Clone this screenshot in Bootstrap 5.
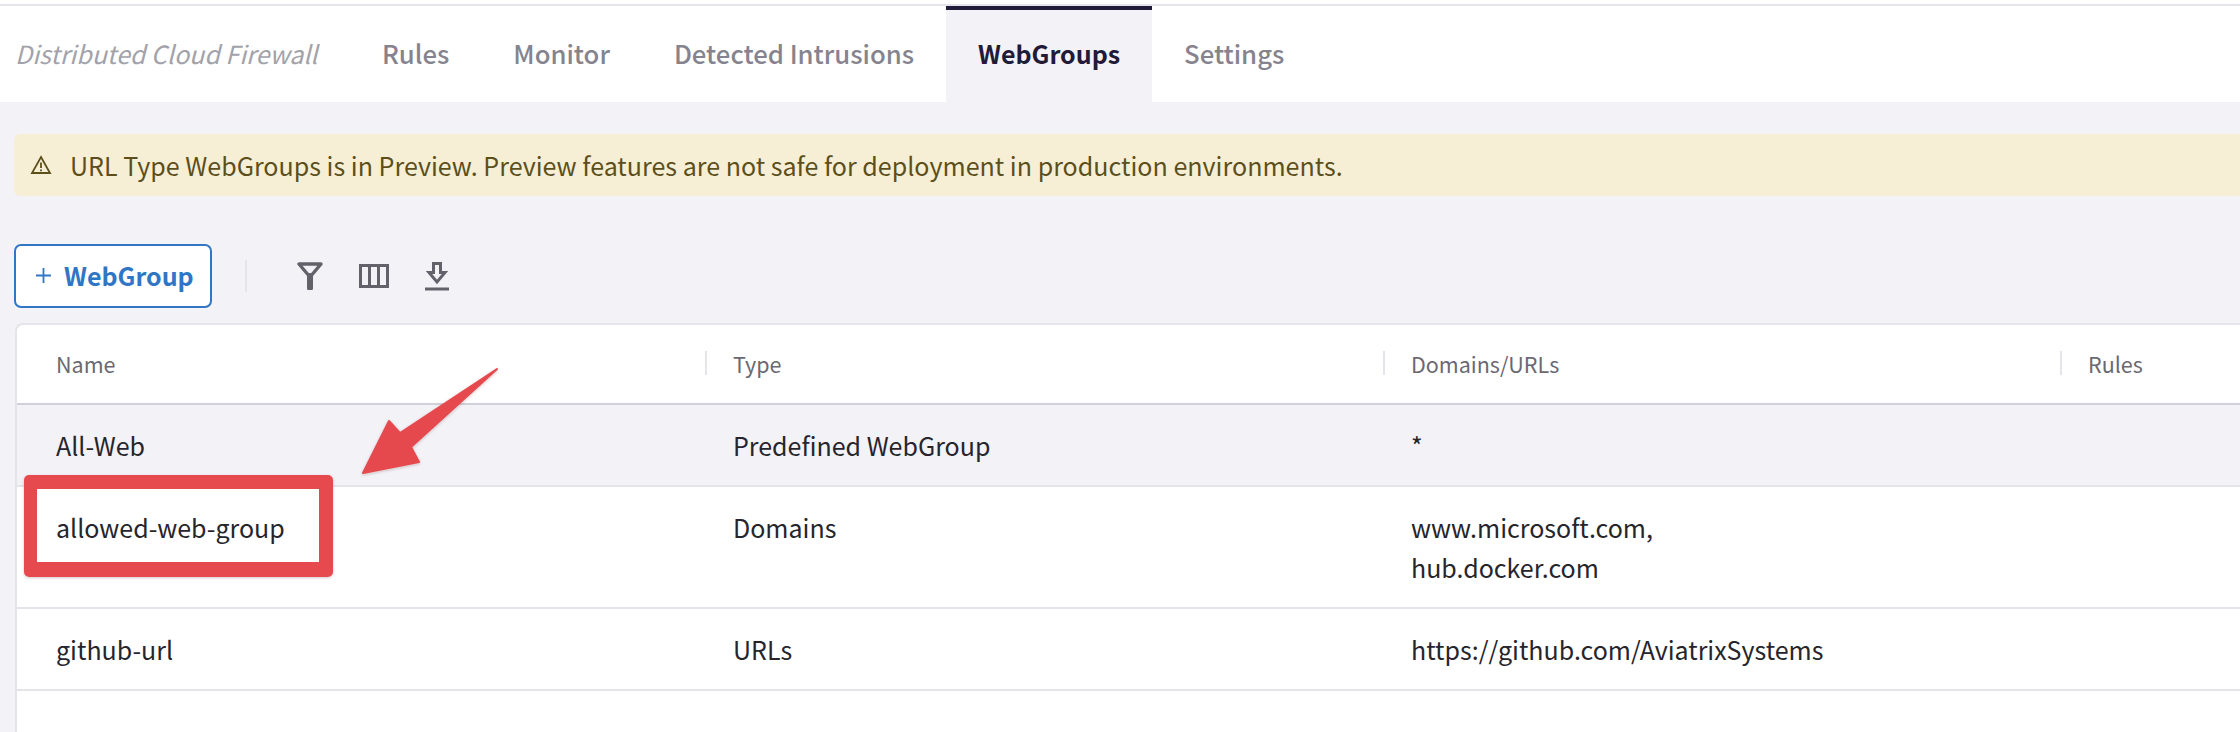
<!DOCTYPE html>
<html lang="en">
<head>
  <meta charset="UTF-8">
  <title>WebGroups</title>
  <link rel="stylesheet" href="https://cdn.jsdelivr.net/npm/bootstrap@5.3.0/dist/css/bootstrap.min.css">
  <style>
    html, body { height: 100%; }
    body {
      background: #f2f2f7;
      color: #26252c;
      font-family: "Noto Sans CJK SC", "Noto Sans", sans-serif;
      font-size: 25px;
      line-height: 40px;
      overflow: hidden;
      position: relative;
    }
    .top-strip { height: 6px; background: #fff; border-bottom: 2px solid #e4e4ea; }
    .tab-bar { height: 96px; background: #fff; padding-left: 15px; }
    .tab-title { width: 335px; margin-top: -2px; color: #a2a2aa; font-style: italic; font-size: 25px; }
    .tab-bar .nav-link {
      height: 96px;
      padding: 0 32px;
      color: #85848e;
      font-size: 25.7px;
      font-weight: 500;
      line-height: 86px;
      border-top: 4px solid transparent;
    }
    .tab-bar .nav-link.active { color: #1f1b38; background: #f2f2f7; border-top-color: #1f1b38; font-size: 25px; font-weight: 600; }
    .page-body { padding: 32px 0 0 14px; }
    .preview-note {
      height: 62px;
      margin-bottom: 48px;
      padding: 0 0 0 16px;
      gap: 18px;
      color: #5c4f1c;
      background: #f7efd5;
      border: 0;
      border-radius: 6px 0 0 6px;
      font-size: 25.05px;
    }
    .add-btn {
      width: 198px;
      height: 64px;
      padding: 0 0 2px 20px;
      gap: 13px;
      color: #3176c4;
      background: #fff;
      border: 2px solid #3176c4;
      border-radius: 7px;
      font-size: 25px;
      font-weight: 600;
      line-height: 56px;
    }
    .tool-sep { width: 2px; height: 32px; margin: 0 50px 0 33px; background: #e4e4ea; }
    .tool-icons { gap: 36px; color: #63626b; }
    .groups-card {
      margin: 15px 0 0 1px;
      height: 420px;
      background: #fff;
      border: 2px solid #e4e4ea;
      border-width: 2px 0 0 2px;
      border-radius: 8px 0 0 0;
    }
    .groups-table { width: 2240px; table-layout: fixed; margin: 0; background: transparent; }
    .groups-table th, .groups-table td {
      padding: 20px 28px;
      background: transparent;
      color: #26252c;
      font-weight: 400;
      vertical-align: top;
      border-bottom: 2px solid #e4e4ea;
      box-shadow: none;
    }
    .groups-table th:first-child, .groups-table td:first-child { padding-left: 39px; }
    .groups-table thead th {
      height: 78px;
      padding: 19px 28px 19px;
      color: #6a6973;
      font-size: 21.5px;
      border-bottom-color: #d0d0da;
      position: relative;
    }
    .groups-table thead th:first-child { padding-left: 39px; }
    .groups-table thead th + th::before {
      content: "";
      position: absolute;
      left: 0;
      top: 26px;
      height: 24px;
      width: 2px;
      background: #e4e4ea;
    }
    .groups-table tr.row-shaded td { background: #f2f2f7; }
    .callout-box {
      position: absolute;
      left: 24px;
      top: 475px;
      width: 309px;
      height: 102px;
      border: solid #e6494e;
      border-width: 14px 14px 15px 13px;
      border-radius: 5px;
      box-shadow: 0 1px 3px rgba(90, 40, 40, .25);
    }
    .callout-arrow { position: absolute; left: 350px; top: 360px; }
  </style>
</head>
<body>
  <div class="top-strip"></div>
  <nav class="tab-bar d-flex align-items-center">
    <div class="tab-title">Distributed Cloud Firewall</div>
    <ul class="nav">
      <li class="nav-item"><a class="nav-link" href="#">Rules</a></li>
      <li class="nav-item"><a class="nav-link" href="#">Monitor</a></li>
      <li class="nav-item"><a class="nav-link" href="#">Detected Intrusions</a></li>
      <li class="nav-item"><a class="nav-link active" href="#">WebGroups</a></li>
      <li class="nav-item"><a class="nav-link" href="#">Settings</a></li>
    </ul>
  </nav>

  <div class="page-body">
    <div class="alert preview-note d-flex align-items-center" role="alert">
      <svg width="22" height="20" viewBox="0 0 22 20" fill="none" stroke="currentColor" stroke-width="1.8">
        <path d="M11 2 L20 18 H2 Z" stroke-linejoin="miter"/>
        <path d="M11 7.5 V13 M11 14.5 V16.2"/>
      </svg>
      <span>URL Type WebGroups is in Preview. Preview features are not safe for deployment in production environments.</span>
    </div>

    <div class="d-flex align-items-center">
      <button class="btn add-btn d-flex align-items-center" type="button">
        <svg width="15" height="15" viewBox="0 0 15 15" stroke="currentColor" stroke-width="1.8"><path d="M7.5 0 V15 M0 7.5 H15"/></svg>
        <span>WebGroup</span>
      </button>
      <div class="tool-sep"></div>
      <div class="tool-icons d-flex align-items-center">
        <svg width="26" height="28" viewBox="0 0 26 28" fill="none" stroke="currentColor"><path d="M2 2 H24 L13 15 Z" stroke-width="3.4" stroke-linejoin="round"/><path d="M13 14 V26" stroke-width="6" stroke-linecap="round"/></svg>
        <svg width="30" height="24" viewBox="0 0 30 24" fill="none" stroke="currentColor" stroke-width="3"><rect x="1.5" y="1.5" width="27" height="21"/><path d="M10.5 2 V22 M19.5 2 V22"/></svg>
        <svg width="24" height="29" viewBox="0 0 24 29" fill="none" stroke="currentColor" stroke-width="3"><path d="M8.5 1.5 H15.5 V10.5 H20 L12 20 L4 10.5 H8.5 Z" stroke-linejoin="miter"/><path d="M0 27 H24"/></svg>
      </div>
    </div>

    <div class="groups-card overflow-hidden">
      <table class="table groups-table">
        <colgroup><col style="width: 688px"><col style="width: 678px"><col style="width: 677px"><col></colgroup>
        <thead>
          <tr><th>Name</th><th>Type</th><th>Domains/URLs</th><th>Rules</th></tr>
        </thead>
        <tbody>
          <tr class="row-shaded"><td>All-Web</td><td>Predefined WebGroup</td><td>*</td><td></td></tr>
          <tr><td>allowed-web-group</td><td>Domains</td><td>www.microsoft.com,<br>hub.docker.com</td><td></td></tr>
          <tr><td>github-url</td><td>URLs</td><td>https://github.com/AviatrixSystems</td><td></td></tr>
        </tbody>
      </table>
    </div>
  </div>

  <!-- red annotation over the table -->
  <div class="callout-box"></div>
  <svg class="callout-arrow" width="160" height="120" viewBox="350 360 160 120">
    <defs><filter id="soft" x="-20%" y="-20%" width="140%" height="140%"><feDropShadow dx="0" dy="1" stdDeviation="1.5" flood-color="#5a2828" flood-opacity=".25"/></filter></defs>
    <path d="M497 369 L411 447 L419 462 L363 473 L389 421 L400 433 L497 369 Z" fill="#e6494e" stroke="#e6494e" stroke-width="2" stroke-linejoin="round" filter="url(#soft)"/>
  </svg>

  <script src="https://cdn.jsdelivr.net/npm/bootstrap@5.3.0/dist/js/bootstrap.bundle.min.js"></script>
</body>
</html>
